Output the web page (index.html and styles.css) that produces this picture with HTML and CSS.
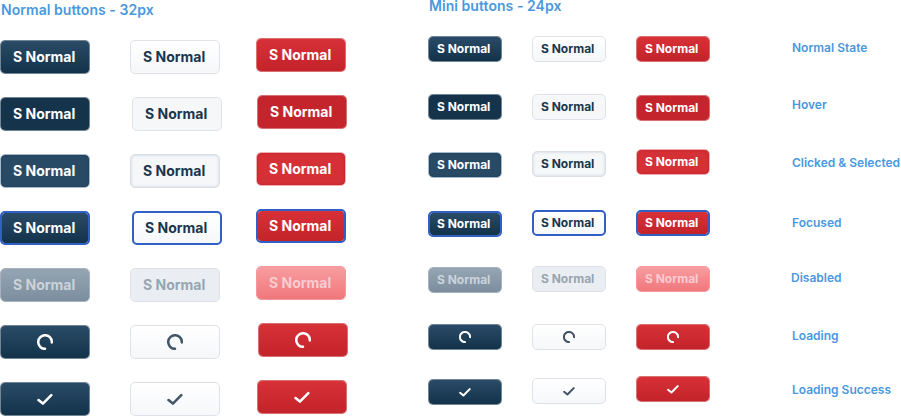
FILE: index.html
```html
<!DOCTYPE html>
<html lang="en">
<head>
<meta charset="utf-8">
<title>Button states</title>
<link rel="stylesheet" href="styles.css">
</head>
<body>
<svg class="symbols" width="0" height="0">
  <symbol id="spinner" viewBox="0 0 16 16"><path d="M8 14.8A6.8 6.8 0 1 1 14.8 8.4"/></symbol>
  <symbol id="check" viewBox="0 0 16 16"><path d="M1.5 9.1L5.9 12.6L14.3 4.2"/></symbol>
</svg>
<main class="sheet">
  <section class="group">
    <h2 class="heading">Normal buttons - 32px</h2>
    <div class="columns">
      <div class="column navy">
        <button class="btn">S Normal</button>
        <button class="btn hover">S Normal</button>
        <button class="btn selected">S Normal</button>
        <button class="btn focused">S Normal</button>
        <button class="btn disabled">S Normal</button>
        <button class="btn" aria-label="Loading"><svg class="icon"><use href="#spinner"/></svg></button>
        <button class="btn" aria-label="Success"><svg class="icon"><use href="#check"/></svg></button>
      </div>
      <div class="column light">
        <button class="btn">S Normal</button>
        <button class="btn hover indent-2">S Normal</button>
        <button class="btn selected">S Normal</button>
        <button class="btn focused indent-2">S Normal</button>
        <button class="btn disabled">S Normal</button>
        <button class="btn" aria-label="Loading"><svg class="icon"><use href="#spinner"/></svg></button>
        <button class="btn" aria-label="Success"><svg class="icon"><use href="#check"/></svg></button>
      </div>
      <div class="column red">
        <button class="btn">S Normal</button>
        <button class="btn hover indent-1">S Normal</button>
        <button class="btn selected">S Normal</button>
        <button class="btn focused">S Normal</button>
        <button class="btn disabled">S Normal</button>
        <button class="btn indent-2" aria-label="Loading"><svg class="icon"><use href="#spinner"/></svg></button>
        <button class="btn indent-1" aria-label="Success"><svg class="icon"><use href="#check"/></svg></button>
      </div>
    </div>
  </section>
  <section class="group mini">
    <h2 class="heading">Mini buttons - 24px</h2>
    <div class="columns">
      <div class="column navy">
        <button class="btn">S Normal</button>
        <button class="btn hover">S Normal</button>
        <button class="btn selected">S Normal</button>
        <button class="btn focused">S Normal</button>
        <button class="btn disabled">S Normal</button>
        <button class="btn" aria-label="Loading"><svg class="icon"><use href="#spinner"/></svg></button>
        <button class="btn" aria-label="Success"><svg class="icon"><use href="#check"/></svg></button>
      </div>
      <div class="column light">
        <button class="btn">S Normal</button>
        <button class="btn hover">S Normal</button>
        <button class="btn selected">S Normal</button>
        <button class="btn focused">S Normal</button>
        <button class="btn disabled">S Normal</button>
        <button class="btn" aria-label="Loading"><svg class="icon"><use href="#spinner"/></svg></button>
        <button class="btn" aria-label="Success"><svg class="icon"><use href="#check"/></svg></button>
      </div>
      <div class="column red">
        <button class="btn">S Normal</button>
        <button class="btn hover">S Normal</button>
        <button class="btn selected">S Normal</button>
        <button class="btn focused">S Normal</button>
        <button class="btn disabled">S Normal</button>
        <button class="btn" aria-label="Loading"><svg class="icon"><use href="#spinner"/></svg></button>
        <button class="btn" aria-label="Success"><svg class="icon"><use href="#check"/></svg></button>
      </div>
    </div>
  </section>
  <ul class="labels">
    <li>Normal State</li>
    <li>Hover</li>
    <li>Clicked &amp; Selected</li>
    <li>Focused</li>
    <li>Disabled</li>
    <li>Loading</li>
    <li>Loading Success</li>
  </ul>
</main>
</body>
</html>
```
FILE: styles.css
```css
* { box-sizing: border-box; }

body {
  margin: 0;
  background: #fff;
  font-family: Inter, "Liberation Sans", sans-serif;
  overflow: hidden;
}

.symbols { display: none; }

.sheet { display: flex; height: 416px; }

.group { width: 428px; flex: none; }
.group.mini { width: 364px; }

.heading {
  margin: 0;
  padding-left: 1px;
  height: 38px;
  line-height: 20px;
  font-size: 14px;
  font-weight: 600;
  letter-spacing: 0.05px;
  color: #4a98de;
  white-space: nowrap;
}
.mini .heading { height: 36px; line-height: 12px; }

.columns { display: flex; align-items: flex-start; }

.column {
  display: flex;
  flex-direction: column;
  gap: 23px;
  width: 130px;
  padding-top: 2px;
}
.column.light { width: 126px; }
.column.red { padding-top: 0; }
.mini .column { width: 104px; gap: 0; padding-top: 0; }

.btn {
  display: flex;
  align-items: center;
  justify-content: flex-start;
  flex: none;
  width: 90px;
  height: 34px;
  padding: 0 0 0 12px;
  border: 1px solid transparent;
  border-radius: 5px;
  font: 700 14px/20px Inter, "Liberation Sans", sans-serif;
  color: #fff;
}
.mini .btn {
  width: 74px;
  height: 26px;
  padding: 0 0 1px 8px;
  font-size: 12px;
  line-height: 16px;
}
.btn[aria-label], .mini .btn[aria-label] { justify-content: center; padding-left: 0; }

.indent-1 { margin-left: 1px; }
.indent-2 { margin-left: 2px; }

.navy .btn { background: linear-gradient(#2a4b67, #13334b) padding-box; border-color: rgba(19, 51, 75, 0.6); }
.navy .btn.hover { background: #15344b padding-box; }
.navy .btn.selected { background: #294a65 padding-box; border-color: #a5bacd; box-shadow: inset 0 0 2px #17364e; }
.navy .btn.disabled { background: linear-gradient(#95a5b3, #7c8e9e) padding-box; border-color: #a6b2bd; color: #cbd3da; }

.light .btn { background: linear-gradient(#fff, #f5f7f9) padding-box; border-color: #dfe3e9; color: #18364e; }
.light .btn.hover { background: #f5f7f9 padding-box; }
.light .btn.selected { background: #f5f7f9 padding-box; border-color: #d9dee4; box-shadow: inset 0 0 3px #c9d0d8; }
.light .btn.disabled { background: #eaeef3 padding-box; border-color: #dce1e7; color: #96a5b2; }
.light .icon { color: #435466; }

.red .btn { background: linear-gradient(#d83138, #c3232a) padding-box; border-color: rgba(195, 35, 42, 0.65); }
.red .btn.hover { background: #c4242b padding-box; }
.red .btn.selected { background: #d63037 padding-box; border-color: #efafb3; box-shadow: inset 0 0 3px #b51e26; }
.red .btn.disabled { background: linear-gradient(#f79da0, #f0777c) padding-box; border-color: #f3989c; color: #fbcbd0; }

.column .btn.focused { border: 2px solid #305fc5; padding-left: 11px; }
.mini .column .btn.focused { padding-left: 7px; }

.icon {
  width: 16px;
  height: 16px;
  fill: none;
  stroke: currentColor;
  stroke-width: 2.5;
  stroke-linecap: round;
  stroke-linejoin: round;
}
.mini .icon { width: 12px; height: 12px; stroke-width: 2.7; }

.mini .btn:nth-child(2) { margin-top: 32px; }
.mini .btn:nth-child(3) { margin-top: 32px; }
.mini .btn:nth-child(4) { margin-top: 33px; }
.mini .btn:nth-child(5) { margin-top: 30px; }
.mini .btn:nth-child(6) { margin-top: 31px; }
.mini .btn:nth-child(7) { margin-top: 29px; }

.mini .light .btn:nth-child(3) { margin-top: 31px; }
.mini .light .btn:nth-child(6) { margin-top: 32px; }
.mini .light .btn:nth-child(7) { margin-top: 28px; }

.mini .red .btn:nth-child(2) { margin-top: 33px; }
.mini .red .btn:nth-child(3) { margin-top: 28px; }
.mini .red .btn:nth-child(4) { margin-top: 35px; }
.mini .red .btn:nth-child(6) { margin-top: 32px; }
.mini .red .btn:nth-child(7) { margin-top: 26px; }

.labels {
  margin: 0;
  padding: 40px 0 0;
  list-style: none;
  font-size: 12px;
  line-height: 16px;
  font-weight: 600;
  letter-spacing: 0;
  color: #4a98de;
  white-space: nowrap;
}
.labels li { margin-bottom: 41px; }
.labels li:nth-child(2) { margin-bottom: 42px; }
.labels li:nth-child(3) { margin-bottom: 44px; }
.labels li:nth-child(4) { margin-bottom: 39px; }
.labels li:nth-child(5) { margin-left: -1px; margin-bottom: 42px; }
.labels li:nth-child(6) { margin-bottom: 38px; }
```
